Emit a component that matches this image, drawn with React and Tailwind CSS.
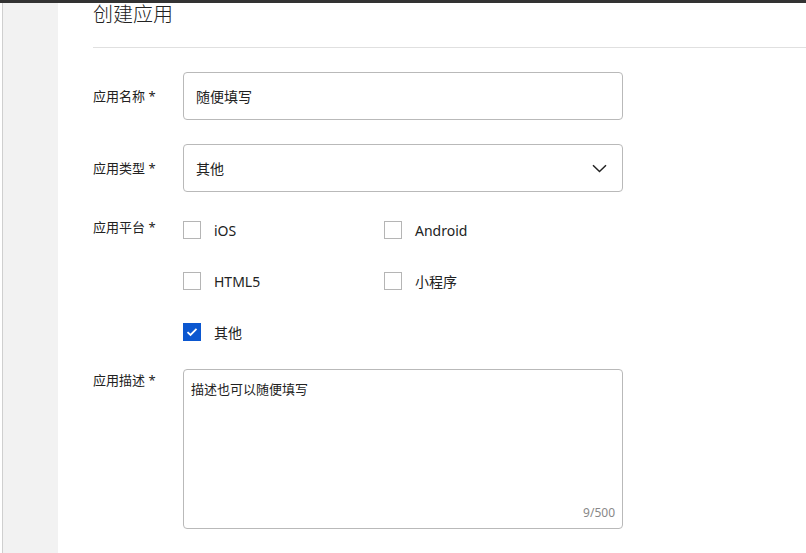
import { useState } from 'react';

const platforms = [
  { key: 'ios', label: 'iOS' },
  { key: 'android', label: 'Android' },
  { key: 'h5', label: 'HTML5' },
  { key: 'mini', label: '小程序' },
  { key: 'other', label: '其他' },
];

const font = { fontFamily: '"Noto Sans", "Noto Sans CJK SC", sans-serif' };

const Label = ({ children, className = '' }) => (
  <div className={`w-[90px] shrink-0 text-[13px] leading-5 text-[#222] ${className}`}>
    {children} <span>*</span>
  </div>
);

const Checkbox = ({ checked, label, onChange }) => (
  <label className="flex items-center h-[18px] cursor-pointer">
    {checked ? (
      <span className="w-[18px] h-[18px] bg-[#0b57d0] flex items-center justify-center">
        <svg width="12" height="10" viewBox="0 0 12 10" fill="none">
          <path d="M1.5 5.2 L4.5 8 L10.5 1.8" stroke="white" strokeWidth="1.8" />
        </svg>
      </span>
    ) : (
      <span className="w-[18px] h-[18px] border border-[#b5b5b5] bg-white" />
    )}
    <input type="checkbox" className="hidden" checked={checked} onChange={onChange} />
    <span className="ml-[13px] text-[14px] text-[#222]">{label}</span>
  </label>
);

export default function App() {
  const [name, setName] = useState('随便填写');
  const [desc, setDesc] = useState('描述也可以随便填写');
  const [checked, setChecked] = useState({ other: true });

  return (
    <div className="h-[553px] overflow-hidden bg-white" style={font}>
      <div className="h-[3px] bg-[#333]" />
      <div className="flex h-[550px]">
        {/* Sidebar */}
        <div className="w-[58px] shrink-0 pl-[2px] bg-white">
          <div className="h-full bg-[#f2f2f2] border-l border-[#cfcfcf]" />
        </div>

        {/* Main */}
        <div className="flex-1 pl-[35px]">
          <h1 className="text-[20px] leading-6 font-light text-[#222]">创建应用</h1>
          <div className="mt-[20px] h-px bg-[#e0e0e0]" />

          <div className="pt-[24px]">
            <div className="flex items-center">
              <Label>应用名称</Label>
              <input
                value={name}
                onChange={(e) => setName(e.target.value)}
                className="w-[440px] h-[48px] px-[12px] rounded-[4px] border border-[#b9b9b9] text-[14px] text-[#222] outline-none"
              />
            </div>

            <div className="flex items-center mt-[24px]">
              <Label>应用类型</Label>
              <div className="w-[440px] h-[48px] pl-[12px] pr-[15px] rounded-[4px] border border-[#b9b9b9] flex items-center justify-between">
                <span className="text-[14px] text-[#222]">其他</span>
                <svg width="15" height="9" viewBox="0 0 15 9" fill="none">
                  <path d="M1 1.2 L7.5 7.5 L14 1.2" stroke="#222" strokeWidth="1.5" />
                </svg>
              </div>
            </div>

            <div className="flex mt-[25px]">
              <Label>应用平台</Label>
              <div className="grid grid-cols-[201px_201px] gap-y-[33px] mt-[4px]">
                {platforms.map((p) => (
                  <Checkbox
                    key={p.key}
                    label={p.label}
                    checked={!!checked[p.key]}
                    onChange={() => setChecked({ ...checked, [p.key]: !checked[p.key] })}
                  />
                ))}
              </div>
            </div>

            <div className="flex mt-[28px]">
              <Label className="pt-[1px]">应用描述</Label>
              <div className="relative w-[440px] h-[160px] rounded-[4px] border border-[#b9b9b9]">
                <textarea
                  value={desc}
                  onChange={(e) => setDesc(e.target.value)}
                  className="w-full h-full resize-none px-[7px] pt-[9px] text-[13px] leading-5 text-[#222] outline-none bg-transparent"
                />
                <span className="absolute right-[7px] bottom-[6px] text-[12px] text-[#888]">
                  {desc.length}/500
                </span>
              </div>
            </div>
          </div>
        </div>
      </div>
    </div>
  );
}
